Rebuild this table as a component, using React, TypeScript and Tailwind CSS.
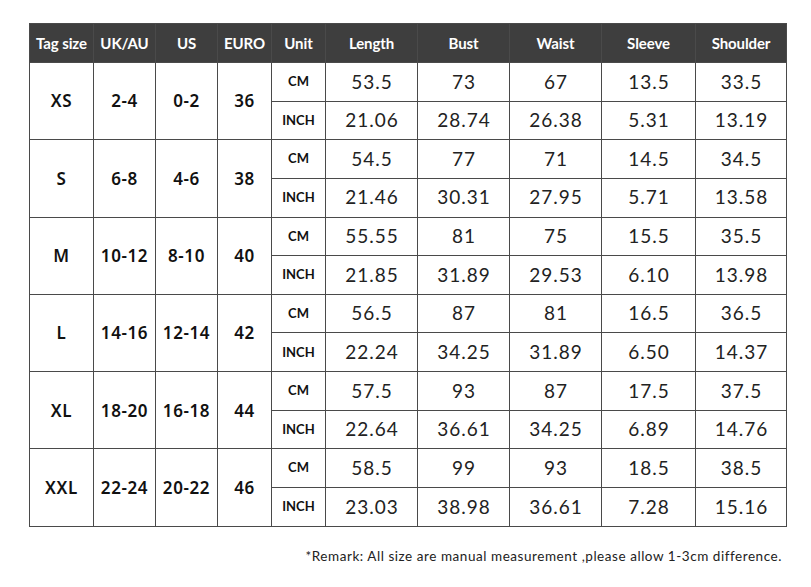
import React from "react";

const rows = [
  { tag: "XS", uk: "2-4", us: "0-2", eu: "36", cm: ["53.5", "73", "67", "13.5", "33.5"], inch: ["21.06", "28.74", "26.38", "5.31", "13.19"] },
  { tag: "S", uk: "6-8", us: "4-6", eu: "38", cm: ["54.5", "77", "71", "14.5", "34.5"], inch: ["21.46", "30.31", "27.95", "5.71", "13.58"] },
  { tag: "M", uk: "10-12", us: "8-10", eu: "40", cm: ["55.55", "81", "75", "15.5", "35.5"], inch: ["21.85", "31.89", "29.53", "6.10", "13.98"] },
  { tag: "L", uk: "14-16", us: "12-14", eu: "42", cm: ["56.5", "87", "81", "16.5", "36.5"], inch: ["22.24", "34.25", "31.89", "6.50", "14.37"] },
  { tag: "XL", uk: "18-20", us: "16-18", eu: "44", cm: ["57.5", "93", "87", "17.5", "37.5"], inch: ["22.64", "36.61", "34.25", "6.89", "14.76"] },
  { tag: "XXL", uk: "22-24", us: "20-22", eu: "46", cm: ["58.5", "99", "93", "18.5", "38.5"], inch: ["23.03", "38.98", "36.61", "7.28", "15.16"] },
];

const headers = ["Tag size", "UK/AU", "US", "EURO", "Unit", "Length", "Bust", "Waist", "Sleeve", "Shoulder"];

const bd = "border border-[#4a4a4a]";
const bold = "font-['Noto_Sans',sans-serif] font-semibold text-[17px] tracking-[0.6px] text-[#111] text-center align-middle whitespace-nowrap";
const unit = "font-['Lato',sans-serif] font-bold text-[13px] text-[#111] text-center align-middle";
const num = "font-['Lato',sans-serif] font-normal text-[19px] tracking-[1px] pl-[1px] text-[#222] text-center align-middle";

export default function App() {
  return (
    <div className="w-[811px] h-[587px] bg-white pt-[23px] pl-[29px] flex flex-col">
      <table className="border-collapse table-fixed w-[757px]">
        <colgroup>
          <col className="w-[64px]" />
          <col className="w-[62px]" />
          <col className="w-[62px]" />
          <col className="w-[54px]" />
          <col className="w-[54px]" />
          <col className="w-[92px]" />
          <col className="w-[92px]" />
          <col className="w-[92px]" />
          <col className="w-[94px]" />
          <col className="w-[91px]" />
        </colgroup>
        <thead>
          <tr className="h-[39px] bg-[#3e3e3e]">
            {headers.map((h) => (
              <th
                key={h}
                className={`${bd} px-0 font-['Lato',sans-serif] font-bold text-[15px] text-white text-center align-middle whitespace-nowrap tracking-[-0.1px]`}
              >
                {h}
              </th>
            ))}
          </tr>
        </thead>
        <tbody>
          {rows.map((r) => (
            <React.Fragment key={r.tag}>
              <tr className="h-[38.6px]">
                <td rowSpan={2} className={`${bd} ${bold}`}>{r.tag}</td>
                <td rowSpan={2} className={`${bd} ${bold}`}>{r.uk}</td>
                <td rowSpan={2} className={`${bd} ${bold}`}>{r.us}</td>
                <td rowSpan={2} className={`${bd} ${bold}`}>{r.eu}</td>
                <td className={`${bd} ${unit}`}>CM</td>
                {r.cm.map((v, i) => (
                  <td key={i} className={`${bd} ${num}`}>{v}</td>
                ))}
              </tr>
              <tr className="h-[38.7px]">
                <td className={`${bd} ${unit}`}>INCH</td>
                {r.inch.map((v, i) => (
                  <td key={i} className={`${bd} ${num}`}>{v}</td>
                ))}
              </tr>
            </React.Fragment>
          ))}
        </tbody>
      </table>
      <div className="w-[753px] mt-[19px] text-right font-['Lato',sans-serif] text-[13.5px] tracking-[0.55px] text-[#222]">
        *Remark: All size are manual measurement ,please allow 1-3cm difference.
      </div>
    </div>
  );
}
